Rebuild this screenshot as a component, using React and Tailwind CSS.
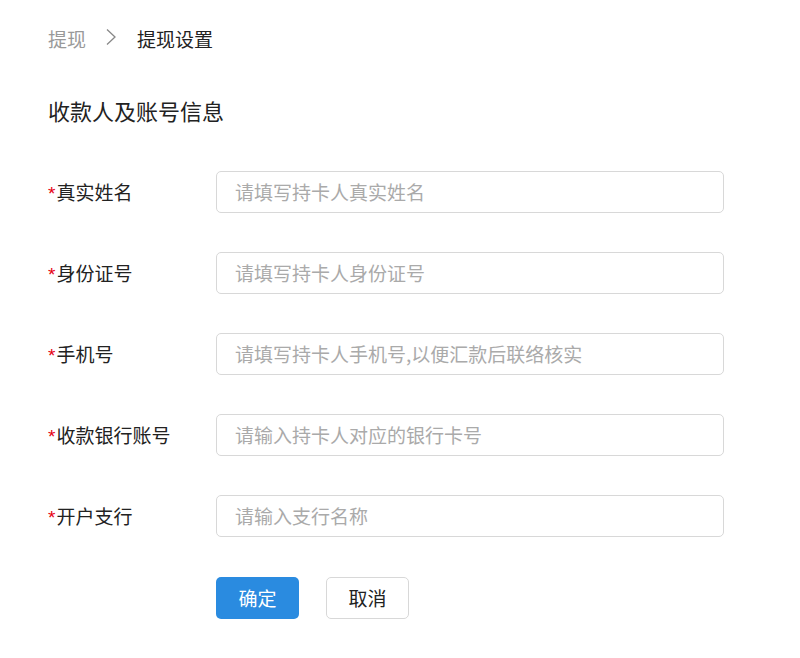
import React from "react";

const rows = [
  ["真实姓名", "请填写持卡人真实姓名"],
  ["身份证号", "请填写持卡人身份证号"],
  ["手机号", "请填写持卡人手机号,以便汇款后联络核实"],
  ["收款银行账号", "请输入持卡人对应的银行卡号"],
  ["开户支行", "请输入支行名称"],
];

export default function App() {
  return (
    <div
      className="min-h-[658px] w-[800px] bg-white pl-[48px] pt-[25px] text-[#222]"
      style={{ fontFamily: '"Noto Sans CJK SC", "Noto Sans", sans-serif' }}
    >
      <div className="flex h-[28px] items-center text-[19px] leading-[28px]">
        <span className="text-[#999]">提现</span>
        <svg width="12" height="18" viewBox="0 0 12 18" className="ml-[19px] mr-[20px] mb-[4px]">
          <path d="M2 1.5 L10 9 L2 16.5" fill="none" stroke="#888" strokeWidth="1.3" />
        </svg>
        <span className="text-[#222]">提现设置</span>
      </div>

      <div className="mt-[42px] h-[30px] text-[22px] leading-[30px] text-[#222]">收款人及账号信息</div>

      <div className="mt-[46px] flex flex-col gap-[39px]">
        {rows.map(([label, ph]) => (
          <div key={label} className="flex h-[42px] items-center">
            <div className="flex w-[168px] items-center text-[19px] text-[#222]">
              <span
                className="mr-[1px] mt-[5px] self-start text-[19px] leading-[22px] text-[#e60012]"
                style={{ fontFamily: '"Liberation Sans", sans-serif' }}
              >
                *
              </span>
              <span className="leading-[28px]">{label}</span>
            </div>
            <div className="flex h-[42px] w-[508px] items-center rounded-[5px] border border-[#d8d8d8] pl-[18px] text-[19px] text-[#aaa]">
              {ph}
            </div>
          </div>
        ))}
      </div>

      <div className="mt-[40px] flex gap-[27px] pl-[168px]">
        <div className="flex h-[42px] w-[83px] items-center justify-center rounded-[5px] bg-[#2a8be0] text-[19px] text-white">
          确定
        </div>
        <div className="flex h-[42px] w-[83px] items-center justify-center rounded-[5px] border border-[#d8d8d8] bg-white text-[19px] text-[#222]">
          取消
        </div>
      </div>
    </div>
  );
}
